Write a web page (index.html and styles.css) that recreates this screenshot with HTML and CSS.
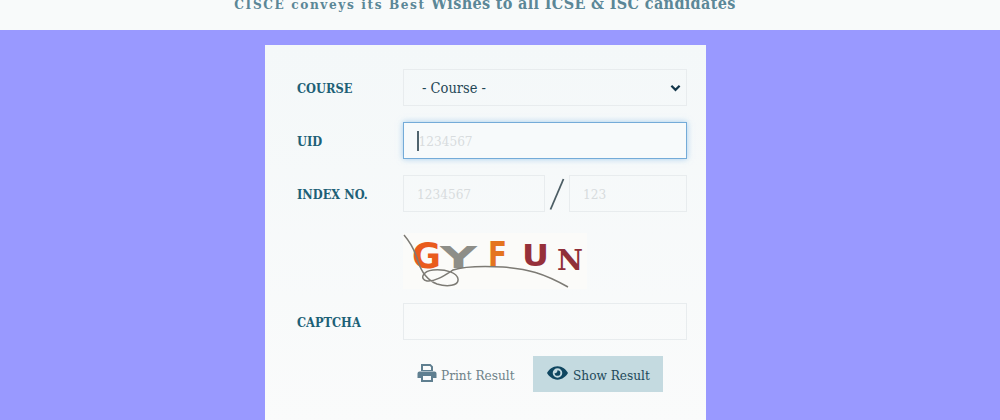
FILE: index.html
```html
<!DOCTYPE html>
<html lang="en">
<head>
<meta charset="utf-8">
<title>CISCE Results</title>
<link rel="stylesheet" href="styles.css">
</head>
<body>
<header class="banner">
  <p class="banner-text"><span class="small">CISCE conveys its Best</span> Wishes to all ICSE &amp; ISC candidates</p>
</header>
<main class="page">
  <form class="card">
    <div class="row">
      <label class="label">COURSE</label>
      <div class="select"><span>- Course -</span>
        <svg class="chev" viewBox="0 0 12 8"><path d="M1.500 1.500 6 6l4.500-4.500" fill="none" stroke="#12364a" stroke-width="2.400"/></svg>
      </div>
    </div>
    <div class="row">
      <label class="label">UID</label>
      <div class="field focus"><i class="caret"></i><span class="ph">1234567</span></div>
    </div>
    <div class="row">
      <label class="label">INDEX NO.</label>
      <div class="index">
        <div class="field wide"><span class="ph pad">1234567</span></div>
        <svg class="slash" viewBox="0 0 16 32"><path d="M1.500 31.500 14.500 1" stroke="#4c5d64" stroke-width="1.800" fill="none"/></svg>
        <div class="field narrow"><span class="ph pad">123</span></div>
      </div>
    </div>
    <div class="row captcha-row">
      <svg class="captcha" viewBox="0 0 184 56">
        <rect width="184" height="56" fill="#fbfbf9"/>
        <text class="cap g" x="9" y="35" textLength="29" lengthAdjust="spacingAndGlyphs">G</text>
        <text class="cap y" x="37" y="35" textLength="37" lengthAdjust="spacingAndGlyphs">Y</text>
        <text class="cap f" x="85" y="34" textLength="19" lengthAdjust="spacingAndGlyphs">F</text>
        <text class="cap u" x="119" y="33" textLength="27" lengthAdjust="spacingAndGlyphs">U</text>
        <text class="cap n" x="154" y="37" textLength="26" lengthAdjust="spacingAndGlyphs">N</text>
        <path d="M1 2C7 9 12 18 15 28c3 10 9 19 19 23 10 3 22 2 21-5-1-6-11-10-25-9-10 1-14 9-6 11 8 1 18-6 26-11 12-4 30-4 50-3 25 2 40 6 65 20" fill="none" stroke="#7c7a74" stroke-width="1.500"/>
      </svg>
    </div>
    <div class="row">
      <label class="label">CAPTCHA</label>
      <div class="field"></div>
    </div>
    <div class="actions">
      <button type="button" class="btn print">
        <svg class="ico" viewBox="0 0 20 20"><path fill="#5f7f90" d="M4 1h9.500L16 3.500V8H4zM6 3v4h8V4.300L13 3zM2.500 8.500h15a2 2 0 0 1 2 2V15H16v4H4v-4H.5v-4.500a2 2 0 0 1 2-2zM6 13v4h8v-4z"/></svg>
        Print Result</button>
      <button type="button" class="btn show">
        <svg class="ico eye" viewBox="0 0 22 14"><path fill="#0f4660" fill-rule="evenodd" d="M11 0c5 0 9 3.500 11 7-2 3.500-6 7-11 7S2 10.500 0 7c2-3.500 6-7 11-7zm0 2a5 5 0 1 0 0 10 5 5 0 0 0 0-10zm0 2a3 3 0 1 1-3 3c1 .6 3-.6 3-3z"/></svg>
        Show Result</button>
    </div>
  </form>
</main>
</body>
</html>
```
FILE: styles.css
```css
* { box-sizing: border-box; }
html, body { margin: 0; height: 100%; }
body {
  width: 1000px;
  height: 420px;
  overflow: hidden;
  background: #9999ff;
  font-family: "DejaVu Serif Condensed", "DejaVu Serif", "Liberation Serif", serif;
}
.banner {
  height: 30px;
  background: #f8fafa;
  overflow: hidden;
}
.banner-text {
  margin: -5px 0 0;
  padding-right: 30px;
  text-align: center;
  font-size: 16px;
  line-height: 18px;
  font-weight: 700;
  color: #5b8797;
  letter-spacing: .35px;
}
.banner-text .small { font-size: 13.500px; letter-spacing: 1.600px; }
.page { padding-top: 15px; }
.card {
  width: 441px;
  height: 380px;
  margin-left: 265px;
  background: linear-gradient(#f4f8f9, #fafbfb);
  padding: 24px 19px 0 32px;
  display: flex;
  flex-direction: column;
}
.row {
  display: flex;
  align-items: center;
  height: 37px;
  margin-bottom: 16px;
}
.label {
  width: 106px;
  padding-top: 2px;
  font-size: 12.700px;
  font-weight: 700;
  color: #1d6076;
}
.select, .field {
  height: 37px;
  border: 1px solid #e8ecee;
  display: flex;
  align-items: center;
}
.select {
  width: 284px;
  padding: 0 0 0 18px;
  justify-content: space-between;
  font-size: 14.500px;
  color: #1f4655;
}
.chev { width: 11px; height: 8px; margin-right: 5px; }
.field { width: 284px; font-size: 13.500px; }
.field.focus {
  background: #f7fafb;
  border: 1px solid #74abd8;
  box-shadow: 0 0 6px rgba(110, 175, 230, .6);
  padding-left: 13px;
}
.caret { width: 1.500px; height: 20px; background: #50646e; }
.ph { color: #d8dcde; }
.pad { padding-left: 13px; }
.index { display: flex; align-items: center; }
.wide { width: 142px; }
.narrow { width: 118px; }
.slash { width: 16px; height: 32px; margin: 0 4px; }
.captcha-row { height: 56px; margin: 5px 0 14px; padding-left: 106px; }
.captcha { width: 184px; height: 56px; }
.cap { font-family: "DejaVu Sans", sans-serif; font-weight: 700; }
.cap.g { font-size: 35px; fill: #e95b1d; }
.cap.y { font-size: 30px; fill: #8e8e88; }
.cap.f { font-size: 36px; fill: #e4741f; }
.cap.u { font-size: 31px; fill: #96303a; }
.cap.n { font-family: "DejaVu Serif", serif; font-size: 27px; fill: #8f2f38; }
.actions {
  display: flex;
  padding-left: 106px;
  height: 36px;
}
.btn {
  border: 0;
  height: 36px;
  padding-top: 2px;
  display: flex;
  align-items: center;
  font: 400 13.500px "DejaVu Serif Condensed", "DejaVu Serif", serif;
  cursor: pointer;
}
.print {
  width: 130px;
  background: transparent;
  color: #6f8289;
  padding-left: 14px;
  padding-right: 0;
  gap: 4px;
}
.show {
  width: 130px;
  background: #c4dae0;
  color: #22495a;
  padding-left: 14px;
  padding-right: 0;
  gap: 5px;
}
.ico { width: 20px; height: 20px; flex: none; margin-top: -4px; }
.eye { width: 21px; height: 14px; margin-top: -4px; }
```
